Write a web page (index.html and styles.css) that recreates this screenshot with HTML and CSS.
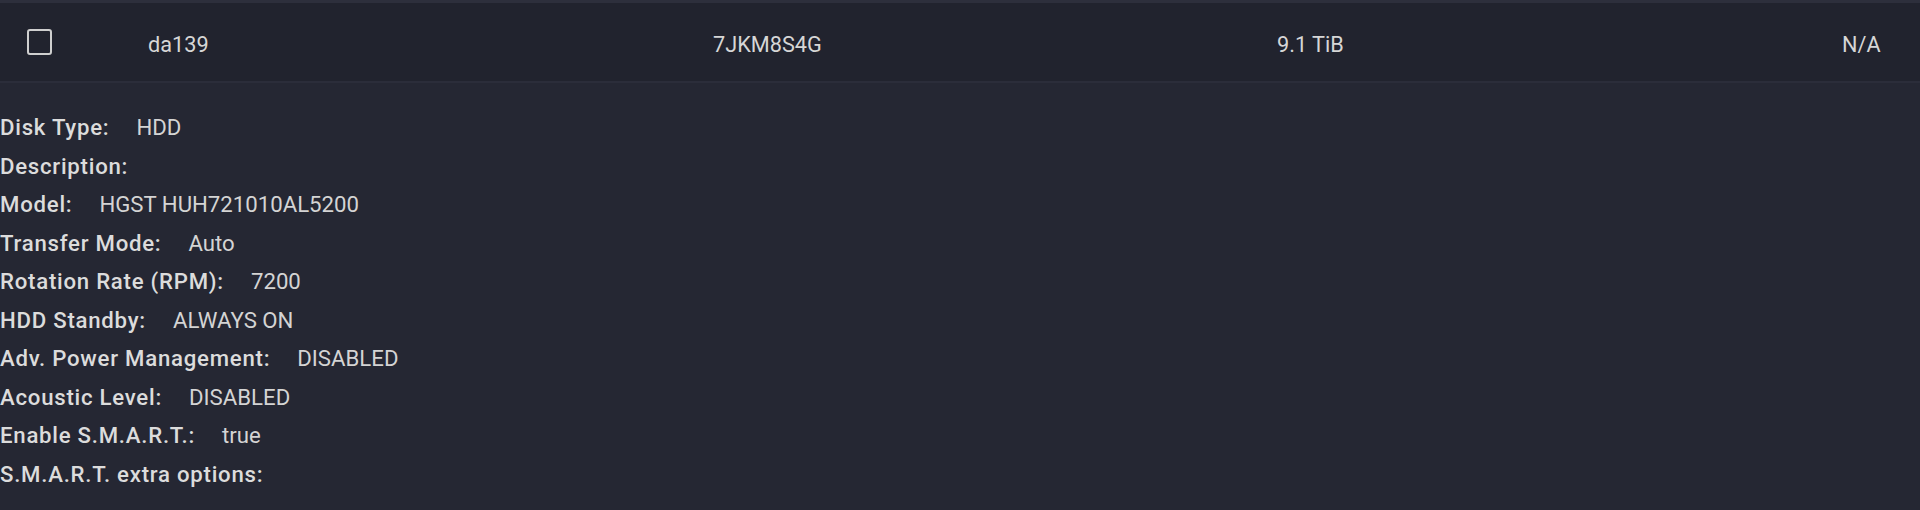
FILE: index.html
```html
<!DOCTYPE html>
<html lang="en">
<head>
    <meta charset="UTF-8">
    <meta name="viewport" content="width=device-width, initial-scale=1.0">
    <title>Disks</title>
    <link rel="stylesheet" href="styles.css">
</head>
<body>
    <div class="top-line"></div>

    <div class="disk-row">
        <div class="cell cell-check">
            <span class="checkbox"></span>
        </div>
        <div class="cell">da139</div>
        <div class="cell">7JKM8S4G</div>
        <div class="cell">9.1 TiB</div>
        <div class="cell">N/A</div>
    </div>

    <div class="details">
        <div class="detail"><span class="label">Disk Type:</span><span class="value">HDD</span></div>
        <div class="detail"><span class="label">Description:</span><span class="value"></span></div>
        <div class="detail"><span class="label">Model:</span><span class="value">HGST HUH721010AL5200</span></div>
        <div class="detail"><span class="label">Transfer Mode:</span><span class="value">Auto</span></div>
        <div class="detail"><span class="label">Rotation Rate (RPM):</span><span class="value">7200</span></div>
        <div class="detail"><span class="label">HDD Standby:</span><span class="value">ALWAYS ON</span></div>
        <div class="detail"><span class="label">Adv. Power Management:</span><span class="value">DISABLED</span></div>
        <div class="detail"><span class="label">Acoustic Level:</span><span class="value">DISABLED</span></div>
        <div class="detail"><span class="label">Enable S.M.A.R.T.:</span><span class="value">true</span></div>
        <div class="detail"><span class="label">S.M.A.R.T. extra options:</span><span class="value"></span></div>
    </div>
</body>
</html>
```

FILE: styles.css
```css
body {
    font-family: Roboto, "Noto Sans", sans-serif;
    font-size: 21.7px;
    background-color: #252733;
    color: #d9d9d9;
    margin: 0;
    padding: 0;
}

.top-line {
    height: 3px;
    background-color: #2d2f3c;
}

.disk-row {
    display: grid;
    grid-template-columns: 148px 565px 564px 565px 1fr;
    align-items: center;
    height: 78px;
    background-color: #21232e;
    border-bottom: 2px solid #2b2d3a;
}

.cell {
    padding-top: 4px;
    color: #d6d6d6;
}

.cell-check {
    padding: 0 0 0 27px;
    display: flex;
    align-items: center;
}

.checkbox {
    display: block;
    width: 21px;
    height: 22px;
    border: 2px solid #cfcfcf;
    border-radius: 3px;
}

.details {
    padding-top: 25px;
    font-size: 22.2px;
}

.detail {
    display: flex;
    line-height: 38.5px;
}

.label {
    font-weight: 500;
    letter-spacing: 0.75px;
    color: #dcdcdc;
}

.value {
    margin-left: 27px;
    color: #d4d4d4;
}
```
